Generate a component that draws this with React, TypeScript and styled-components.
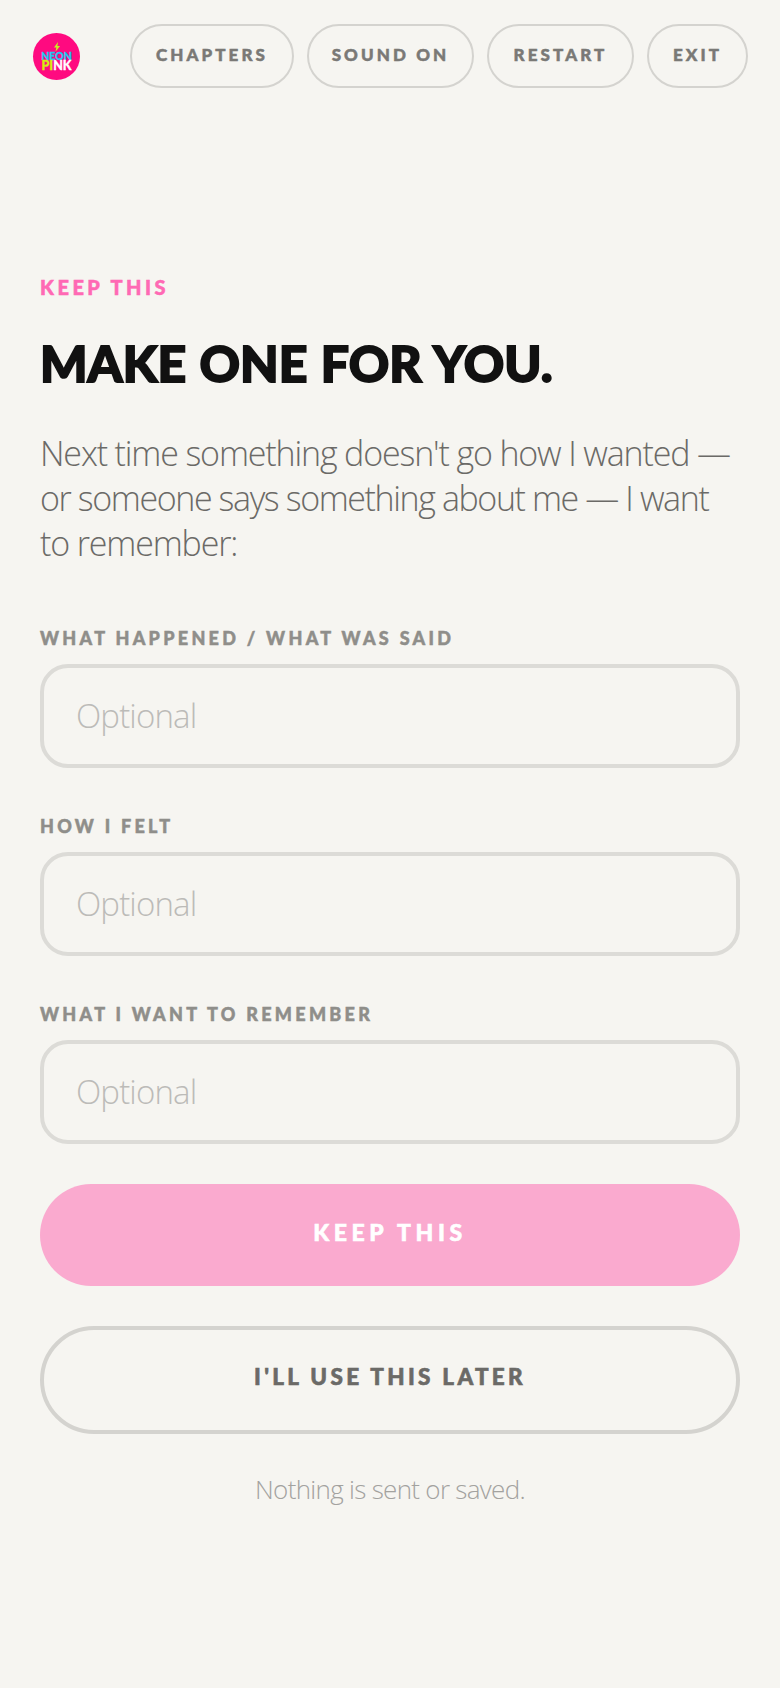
import styled, { createGlobalStyle } from 'styled-components';

const DISPLAY = `Lato, "Liberation Sans", sans-serif`;
const BODY = `"Open Sans", "Liberation Sans", sans-serif`;

const Global = createGlobalStyle`
  html, body {
    margin: 0;
    padding: 0;
    background: #f6f5f1;
  }
`;

const Page = styled.div`
  width: 780px;
  height: 1688px;
  box-sizing: border-box;
  background: #f6f5f1;
  font-family: ${BODY};
  overflow: hidden;
`;

const TopBar = styled.header`
  display: flex;
  align-items: center;
  justify-content: space-between;
  padding: 24px 32px 0 33px;
`;

const Logo = styled.div`
  width: 47px;
  height: 47px;
  border-radius: 50%;
  background: #ff0a80;
  display: flex;
  flex-direction: column;
  align-items: center;
  justify-content: center;
  font-family: ${DISPLAY};
  font-weight: 900;
  font-size: 10.5px;
  line-height: 9px;
  -webkit-text-stroke: 0.3px currentColor;
  color: #22c8f0;
`;

const LogoPink = styled.div`
  color: #fff;
  font-size: 12.5px;
  line-height: 10px;
  & > span {
    color: #d4ee10;
  }
`;

const Nav = styled.nav`
  display: flex;
  gap: 13px;
`;

const NavButton = styled.button<{ $w: number }>`
  width: ${p => p.$w}px;
  height: 64px;
  box-sizing: border-box;
  padding: 0 0 4px;
  background: transparent;
  border: 2px solid #d4d3cf;
  border-radius: 32px;
  font-family: ${DISPLAY};
  font-weight: 900;
  font-size: 17px;
  letter-spacing: 3.1px;
  -webkit-text-stroke: 0.5px currentColor;
  color: #7a7976;
`;

const Main = styled.main`
  padding: 189px 40px 0;
  display: flex;
  flex-direction: column;
`;

const Kicker = styled.div`
  font-family: ${DISPLAY};
  font-weight: 900;
  font-size: 20px;
  line-height: 20px;
  letter-spacing: 3.5px;
  -webkit-text-stroke: 0.5px currentColor;
  color: #ff69b4;
`;

const Title = styled.h1`
  margin: 36px 0 0;
  font-family: ${DISPLAY};
  font-weight: 900;
  font-size: 50px;
  line-height: 60px;
  word-spacing: 1.5px;
  -webkit-text-stroke: 1.8px currentColor;
  color: #111;
`;

const Lead = styled.p`
  margin: 38px 0 0;
  font-weight: 300;
  font-size: 34px;
  line-height: 44.9px;
  letter-spacing: -1.15px;
  color: #6b6a67;
`;

const LeadTight = styled.span`
  letter-spacing: -1.4px;
`;

const Field = styled.label<{ $gap: number }>`
  display: flex;
  flex-direction: column;
  gap: 16px;
  margin-top: ${p => p.$gap}px;
`;

const FieldLabel = styled.span`
  font-family: ${DISPLAY};
  font-weight: 900;
  font-size: 18px;
  line-height: 19px;
  letter-spacing: 3.3px;
  -webkit-text-stroke: 0.5px currentColor;
  color: #8f8e8a;
`;

const Input = styled.input`
  height: 104px;
  box-sizing: border-box;
  padding: 0 32px;
  background: transparent;
  border: 4px solid #dcdbd7;
  border-radius: 28px;
  font-family: ${BODY};
  font-weight: 300;
  font-size: 33px;
  letter-spacing: -0.85px;
  outline: none;
  &::placeholder {
    color: #bcbbb8;
    opacity: 1;
  }
`;

const Primary = styled.button`
  margin-top: 40px;
  height: 102px;
  padding: 0 0 5px;
  border: 0;
  border-radius: 51px;
  background: #faaacf;
  font-family: ${DISPLAY};
  font-weight: 900;
  font-size: 23px;
  letter-spacing: 4.6px;
  -webkit-text-stroke: 0.6px currentColor;
  color: #fff;
`;

const Secondary = styled.button`
  margin-top: 40px;
  height: 108px;
  padding: 0 0 6px;
  background: transparent;
  border: 4px solid #d4d3cf;
  border-radius: 54px;
  font-family: ${DISPLAY};
  font-weight: 900;
  font-size: 22.5px;
  letter-spacing: 3.3px;
  -webkit-text-stroke: 0.6px currentColor;
  color: #6b6a67;
`;

const Note = styled.p`
  margin: 37px 0 0;
  text-align: center;
  font-weight: 300;
  font-size: 26px;
  line-height: 36px;
  letter-spacing: -0.7px;
  color: #a3a29f;
`;

const NAV_ITEMS = [
  { label: 'CHAPTERS', width: 164 },
  { label: 'SOUND ON', width: 167 },
  { label: 'RESTART', width: 147 },
  { label: 'EXIT', width: 101 },
];

const FIELDS = [
  { label: 'WHAT HAPPENED / WHAT WAS SAID', gap: 63 },
  { label: 'HOW I FELT', gap: 49 },
  { label: 'WHAT I WANT TO REMEMBER', gap: 49 },
];

const App = () => {
  return (
    <Page>
      <Global />
      <TopBar>
        <Logo>
          <svg width="8" height="10" viewBox="0 0 8 10">
            <path d="M5 0 1 5.5h2.4L2.4 10 7 4H4.4z" fill="#c8f020" />
          </svg>
          <div>NEON</div>
          <LogoPink>
            <span>PI</span>NK
          </LogoPink>
        </Logo>
        <Nav>
          {NAV_ITEMS.map(item => (
            <NavButton key={item.label} $w={item.width}>
              {item.label}
            </NavButton>
          ))}
        </Nav>
      </TopBar>
      <Main>
        <Kicker>KEEP THIS</Kicker>
        <Title>MAKE ONE FOR YOU.</Title>
        <Lead>
          Next time something doesn't go how I wanted —{' '}
          <LeadTight>or someone says something about me — I want</LeadTight> to remember:
        </Lead>
        {FIELDS.map(f => (
          <Field key={f.label} $gap={f.gap}>
            <FieldLabel>{f.label}</FieldLabel>
            <Input placeholder="Optional" />
          </Field>
        ))}
        <Primary>KEEP THIS</Primary>
        <Secondary>I'LL USE THIS LATER</Secondary>
        <Note>Nothing is sent or saved.</Note>
      </Main>
    </Page>
  );
};

export default App;
